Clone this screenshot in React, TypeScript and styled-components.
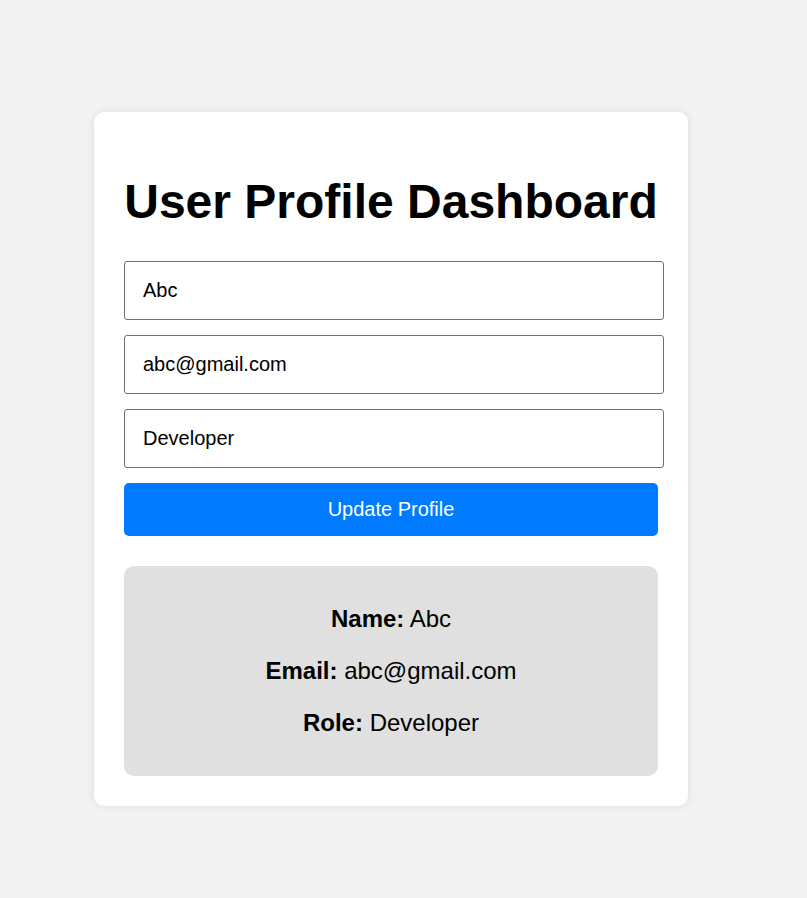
import React, { useState } from "react";
import styled, { createGlobalStyle } from "styled-components";

const GlobalStyle = createGlobalStyle`
  html, body {
    margin: 0;
    padding: 0;
    background-color: #f3f3f3;
    font-family: "Liberation Sans", Arial, sans-serif;
  }
`;

const Page = styled.div`
  min-height: 898px;
  box-sizing: border-box;
  padding: 112px 0 0 94px;
`;

const Card = styled.div`
  width: 594px;
  box-sizing: border-box;
  padding: 30px;
  background-color: #fff;
  border-radius: 10px;
  box-shadow: 0 0 10px rgba(0, 0, 0, 0.1);
`;

const Title = styled.h1`
  margin: 32px 0;
  font-size: 48px;
  font-weight: bold;
  color: #000;
  text-align: center;
  white-space: nowrap;
`;

const Form = styled.form`
  display: flex;
  flex-direction: column;
  gap: 15px;
`;

const Input = styled.input`
  width: 540px;
  box-sizing: border-box;
  padding: 17px 18px;
  font-family: inherit;
  font-size: 20px;
  color: #000;
  border: 1px solid #6f6f6f;
  border-radius: 3px;
  outline: none;
`;

const Button = styled.button`
  width: 534px;
  padding: 15px;
  font-family: inherit;
  font-size: 20px;
  color: #fff;
  background-color: #007bff;
  border: none;
  border-radius: 5px;
  cursor: pointer;
`;

const InfoBox = styled.div`
  margin-top: 30px;
  padding: 15px;
  background-color: #e0e0e0;
  border-radius: 10px;
  text-align: center;
`;

const InfoLine = styled.p`
  margin: 24px 0;
  font-size: 24px;
  color: #000;
`;

export default function App() {
  const [name, setName] = useState("Abc");
  const [email, setEmail] = useState("abc@gmail.com");
  const [role, setRole] = useState("Developer");

  return (
    <>
      <GlobalStyle />
      <Page>
        <Card>
          <Title>User Profile Dashboard</Title>
          <Form onSubmit={(e) => e.preventDefault()}>
            <Input value={name} onChange={(e) => setName(e.target.value)} />
            <Input value={email} onChange={(e) => setEmail(e.target.value)} />
            <Input value={role} onChange={(e) => setRole(e.target.value)} />
            <Button type="submit">Update Profile</Button>
          </Form>
          <InfoBox>
            <InfoLine>
              <strong>Name:</strong> {name}
            </InfoLine>
            <InfoLine>
              <strong>Email:</strong> {email}
            </InfoLine>
            <InfoLine>
              <strong>Role:</strong> {role}
            </InfoLine>
          </InfoBox>
        </Card>
      </Page>
    </>
  );
}
